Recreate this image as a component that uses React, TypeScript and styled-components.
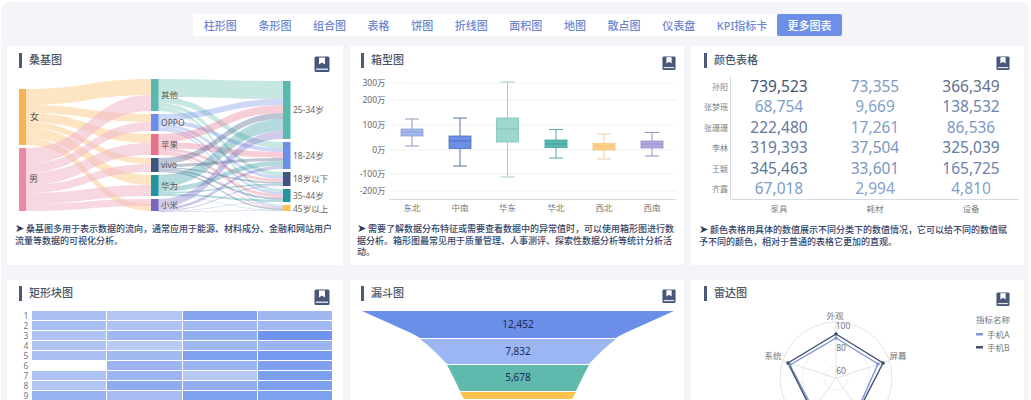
import React from "react";
import styled, { createGlobalStyle } from "styled-components";

const Global = createGlobalStyle`
  html, body { margin: 0; padding: 0; background: #fff; }
  body { width: 1031px; height: 400px; overflow: hidden; font-family: "Noto Sans", "Noto Sans CJK SC", sans-serif; }
`;

const Page = styled.div`
  box-sizing: border-box;
  width: 1028px;
  height: 398px;
  margin: 2px 2px 0 1px;
  background: #f3f5f9;
  border-radius: 8px 8px 0 0;
  overflow: hidden;
`;
const Nav = styled.nav`
  display: flex;
  width: max-content;
  height: 22px;
  margin: 12px 0 10px 192px;
  background: #fff;
`;
const Tab = styled.div<{ $active?: boolean }>`
  display: flex;
  align-items: center;
  padding: 0 ${(p) => (p.$active ? "10.5px" : "10.8px")};
  margin-left: ${(p) => (p.$active ? "-1px" : "0")};
  font-size: 11px;
  font-weight: 500;
  white-space: nowrap;
  color: ${(p) => (p.$active ? "#fff" : "#6c86d2")};
  background: ${(p) => (p.$active ? "#6e8fe8" : "transparent")};
  border-radius: ${(p) => (p.$active ? "2px" : "0")};
`;
const Grid = styled.main`
  display: grid;
  grid-template-columns: 336px 334px 333px;
  grid-template-rows: 219px 130px;
  column-gap: 7px;
  row-gap: 15px;
  margin-left: 6px;
`;
const Card = styled.section`
  display: flex;
  flex-direction: column;
  background: #fff;
  overflow: hidden;
`;
const Header = styled.header<{ $left: number; $right: number; $tall?: boolean }>`
  display: flex;
  justify-content: space-between;
  align-items: flex-start;
  flex: none;
  box-sizing: border-box;
  height: ${(p) => (p.$tall ? "31px" : "30px")};
  padding: ${(p) => (p.$tall ? "6px" : "7px")} ${(p) => p.$right}px 0 ${(p) => p.$left}px;
`;
const Title = styled.h3`
  display: flex;
  align-items: center;
  height: 14.5px;
  margin: 0;
  padding-left: 7px;
  border-left: 3px solid #4a5a78;
  font-size: 11px;
  line-height: 14px;
  font-weight: 500;
  color: #4a5568;
`;
const IconWrap = styled.svg<{ $drop?: number }>`
  flex: none;
  margin-top: ${(p) => 3 + (p.$drop ?? 0)}px;
`;
const Chart = styled.svg`
  display: block;
  flex: none;
  font-family: "Noto Sans", "Noto Sans CJK SC", sans-serif;
`;
const Desc = styled.div<{ $left: number }>`
  margin-top: 6px;
  padding-left: ${(p) => p.$left}px;
  font-size: 9px;
  line-height: 11.5px;
  font-weight: 500;
  color: #33456a;
`;
const DescLine = styled.div`
  white-space: nowrap;
`;
const Arrow = styled.span`
  display: inline-block;
  width: 11px;
  font-size: 11px;
  line-height: 9px;
  color: #2c3a58;
`;
const TableBody = styled.div`
  display: grid;
  grid-template-columns: 40px repeat(3, 96px);
  grid-auto-rows: 20.5px;
`;
const RowName = styled.div`
  display: flex;
  align-items: center;
  justify-content: flex-end;
  font-size: 8px;
  color: #7a7f8a;
  border-right: 1px solid #d5dae3;
  padding-right: 2px;
`;
const Value = styled.div<{ $color: string }>`
  display: flex;
  align-items: center;
  justify-content: center;
  font-size: 15.5px;
  color: ${(p) => p.$color};
  padding-bottom: 1px;
`;
const TableAxis = styled.div`
  display: grid;
  grid-template-columns: repeat(3, 96px);
  height: 18px;
  margin-left: 40px;
  border-top: 1px solid #d5dae3;
  width: 288px;
`;
const ColName = styled.div`
  display: flex;
  align-items: center;
  justify-content: center;
  font-size: 8.5px;
  color: #7a7f8a;
  padding-bottom: 2px;
`;
const HeatGrid = styled.div`
  display: grid;
  grid-template-columns: 10px repeat(4, 74.25px);
  grid-auto-rows: 9px;
  column-gap: 1px;
  row-gap: 1px;
  margin-left: 14px;
`;
const HeatLabel = styled.div`
  display: flex;
  align-items: center;
  justify-content: center;
  font-size: 8.5px;
  line-height: 9px;
  color: #777;
`;
const HeatCell = styled.div<{ $color: string }>`
  background: ${(p) => p.$color};
`;

const BookIcon = ({ size, drop }: { size: number; drop?: number }) => (
  <IconWrap $drop={drop} width={size} height={size} viewBox="0 0 16 16">
    <path d="M2 0.5H14a1.5 1.5 0 0 1 1.5 1.5V14.5a1.5 1.5 0 0 1-1.5 1.5H2A1.5 1.5 0 0 1 .5 14.5V2A1.5 1.5 0 0 1 2 .5Z" fill="#47577a" />
    <path d="M5 1.5H11V8.5L8 6.6L5 8.5Z" fill="#fff" />
    <rect x="2" y="12.5" width="12" height="1.4" fill="#dfe3ea" />
  </IconWrap>
);

const band = (x0: number, y0: number, x1: number, y1: number, w: number) => {
  const m = (x0 + x1) / 2;
  return `M${x0} ${y0}C${m} ${y0} ${m} ${y1} ${x1} ${y1}L${x1} ${y1 + w}C${m} ${y1 + w} ${m} ${y0 + w} ${x0} ${y0 + w}Z`;
};

const midNodes = [
  { name: "其他", y: 79, h: 32, c: "#5bb8ac", ly: 95 },
  { name: "OPPO", y: 114, h: 17, c: "#6b8ee8", ly: 122.5 },
  { name: "苹果", y: 134, h: 21, c: "#e8708a", ly: 144.5 },
  { name: "vivo", y: 158, h: 14, c: "#3f5480", ly: 165 },
  { name: "华为", y: 175, h: 21, c: "#22949f", ly: 185.5 },
  { name: "小米", y: 199, h: 12, c: "#7566c0", ly: 205 },
];
const rightNodes = [
  { name: "25-34岁", y: 81, h: 58, c: "#5bb8ac", ly: 110 },
  { name: "18-24岁", y: 142, h: 27, c: "#6b8ee8", ly: 155.5 },
  { name: "18岁以下", y: 172, h: 14, c: "#3f5480", ly: 179 },
  { name: "35-44岁", y: 189, h: 13, c: "#22949f", ly: 196 },
  { name: "45岁以上", y: 205, h: 6, c: "#fcc14f", ly: 208.5 },
];
const flows = [
  [18, 6, 4, 3, 1],
  [6, 4, 3, 2.5, 1.5],
  [8, 6, 3, 3, 1],
  [6, 3, 1.5, 2, 1.5],
  [12, 5, 1.5, 2, 0.5],
  [8, 3, 1, 0.5, 0.5],
];
const rightLinks = (() => {
  const rOff = rightNodes.map((n) => n.y);
  const out: { d: string; c: string }[] = [];
  flows.forEach((row, i) => {
    let my = midNodes[i].y;
    row.forEach((w, j) => {
      out.push({ d: band(158, my, 283, rOff[j], w), c: midNodes[i].c });
      my += w;
      rOff[j] += w;
    });
  });
  return out;
})();
const leftLinks = [
  [89, 79, 16, "#fbd29b"], [105, 114, 8, "#fbd29b"], [113, 134, 9, "#fbd29b"], [122, 158, 6, "#fbd29b"], [128, 175, 10, "#fbd29b"], [138, 204, 7, "#fbd29b"],
  [148, 95, 16, "#f2bccb"], [164, 122, 9, "#f2bccb"], [173, 143, 12, "#f2bccb"], [185, 164, 8, "#f2bccb"], [193, 185, 11, "#f2bccb"], [204, 199, 7, "#f2bccb"],
] as const;

const Sankey = () => (
  <Chart width={336} height={141} viewBox="7 76 336 141">
    {leftLinks.map(([a, b, w, c], i) => (
      <path key={i} d={band(26, a, 151, b, w)} fill={c} opacity={0.6} />
    ))}
    {rightLinks.map((l, i) => (
      <path key={i} d={l.d} fill={l.c} opacity={0.34} />
    ))}
    <rect x={19} y={89} width={7} height={56} fill="#f9b154" />
    <rect x={19} y={148} width={7} height={63} fill="#e98aa2" />
    <g fontSize={9} fill="#555">
      <text x={30} y={120}>女</text>
      <text x={29} y={182}>男</text>
    </g>
    {midNodes.map((n) => (
      <g key={n.name}>
        <rect x={151} y={n.y} width={7.5} height={n.h} fill={n.c} />
        <text x={161} y={n.ly + 3} fontSize={8.5} fill="#555">{n.name}</text>
      </g>
    ))}
    {rightNodes.map((n) => (
      <g key={n.name}>
        <rect x={283} y={n.y} width={7.5} height={n.h} fill={n.c} />
        <text x={293} y={n.ly + 3} fontSize={8.5} fill="#666">{n.name}</text>
      </g>
    ))}
  </Chart>
);

const boxes = [
  { x: 412, t: 119, b: 146, y0: 129, y1: 136, m: 132, f: "#9fb6f2", s: "#8fa3cf", w: "#8d9cbd" },
  { x: 460, t: 118, b: 166, y0: 136, y1: 148.5, m: 141, f: "#6e8fe8", s: "#4f6fb5", w: "#5a74a4" },
  { x: 507.5, t: 82, b: 177, y0: 118, y1: 142, m: 129, f: "#9ed8cc", s: "#80c2b8", w: "#a5cdc8" },
  { x: 556, t: 129.5, b: 158, y0: 140, y1: 147.5, m: 144, f: "#5bb8ac", s: "#3ca0a0", w: "#5fa8a8" },
  { x: 604, t: 134, b: 159, y0: 143.5, y1: 150, m: 146, f: "#fcd08a", s: "#f5c77a", w: "#e8d0a0" },
  { x: 652, t: 132.5, b: 156, y0: 141, y1: 148, m: 144, f: "#b3a8de", s: "#9c90cc", w: "#9c94bc" },
];
const boxAxis: [string, number][] = [["300万", 83], ["200万", 100], ["100万", 125], ["0万", 150], ["-100万", 174], ["-200万", 191]];
const boxCats = ["东北", "中南", "华东", "华北", "西北", "西南"];

const BoxPlot = () => (
  <Chart width={334} height={141} viewBox="350 76 334 141">
    {boxAxis.map(([l, y]) => (
      <g key={l}>
        <line x1={389} x2={676} y1={y} y2={y} stroke="#f1f2f4" />
        <text x={385.5} y={y + 3} fontSize={8.5} textAnchor="end" fill="#666">{l}</text>
      </g>
    ))}
    <line x1={389} x2={676} y1={199.5} y2={199.5} stroke="#d5dae3" />
    {boxes.map((b, i) => (
      <g key={i}>
        <line x1={b.x} x2={b.x} y1={b.t} y2={b.b} stroke={b.w} />
        <line x1={b.x - 7} x2={b.x + 7} y1={b.t} y2={b.t} stroke={b.w} />
        <line x1={b.x - 7} x2={b.x + 7} y1={b.b} y2={b.b} stroke={b.w} />
        <rect x={b.x - 11} y={b.y0} width={22} height={b.y1 - b.y0} fill={b.f} stroke={b.s} strokeWidth={0.8} />
        <line x1={b.x - 11} x2={b.x + 11} y1={b.m} y2={b.m} stroke={b.s} />
        <text x={b.x} y={211} fontSize={8.5} textAnchor="middle" fill="#777">{boxCats[i]}</text>
      </g>
    ))}
  </Chart>
);

const tableRows: [string, [string, string][]][] = [
  ["孙阳", [["739,523", "#46546e"], ["73,355", "#7f9ac4"], ["366,349", "#5f7090"]]],
  ["张梦瑶", [["68,754", "#7f9dc8"], ["9,669", "#83a0cc"], ["138,532", "#6c84ae"]]],
  ["张珊珊", [["222,480", "#64789e"], ["17,261", "#7f9dc8"], ["86,536", "#7b98c4"]]],
  ["李林", [["319,393", "#6078a4"], ["37,504", "#7a94c0"], ["325,039", "#607aa0"]]],
  ["王颖", [["345,463", "#5d74a0"], ["33,601", "#7a94c0"], ["165,725", "#6c84ae"]]],
  ["齐露", [["67,018", "#7f9dc8"], ["2,994", "#83a0cc"], ["4,810", "#83a0cc"]]],
];

const heat = [
  ["#a9bff2", "#b3c6f3", "#85a5ef", "#a0b8f1"],
  ["#a9bff2", "#afc3f3", "#a0b8f1", "#a0b8f1"],
  ["#aec2f3", "#9fb7f1", "#90adf0", "#6f94ee"],
  ["#afc3f3", "#b9caf4", "#a0b8f1", "#9ab3f1"],
  ["#aabff2", "#a3baf1", "#80a1ef", "#7599ee"],
  ["#ffffff", "#9cb5f1", "#9ab3f1", "#7fa0ef"],
  ["#aec2f3", "#9cb5f1", "#b5c7f3", "#7ba0ef"],
  ["#b3c6f3", "#8fabf0", "#92aef0", "#7da0ef"],
  ["#98b2f1", "#a6bcf2", "#7fa0ef", "#7da0ef"],
];

const Funnel = () => (
  <Chart width={334} height={88} viewBox="350 311 334 88">
    <path d="M362 311H674L625 333Q619 336 616 338H420Q417 336 411 333Z" fill="#6b8ee8" />
    <path d="M420 339H616Q604 348 589 364H447Q432 348 420 339Z" fill="#9cb5f3" />
    <path d="M447 365H589Q584 374 576 391H460Q452 374 447 365Z" fill="#60b9ad" />
    <path d="M460 392H576L566 410H470Z" fill="#fcc14f" />
    <g fontSize={10} fill="#1d2b57" textAnchor="middle">
      <text x={518} y={327.5}>12,452</text>
      <text x={518} y={354.5}>7,832</text>
      <text x={518} y={381}>5,678</text>
    </g>
  </Chart>
);

const toPts = (p: number[][]) => p.map((q) => q.join(",")).join(" ");
const ptsA = [[836, 338], [878, 364], [857, 411], [814, 411], [790, 365]];
const ptsB = [[836, 334], [883, 363], [859, 410], [812, 411], [788, 363]];
const spokes = [[836, 322], [889, 361], [869, 423], [803, 423], [783, 361]];

const Radar = () => (
  <Chart width={333} height={89} viewBox="691 311 333 89">
    <g fill="none" stroke="#e2e3e6">
      <circle cx={836} cy={378} r={56} strokeWidth={1} />
      <circle cx={836} cy={378} r={34} stroke="#f0f0f2" />
      <circle cx={836} cy={378} r={12} stroke="#f0f0f2" />
      {spokes.map((s, i) => (
        <line key={i} x1={836} y1={378} x2={s[0]} y2={s[1]} />
      ))}
    </g>
    <polygon points={toPts(ptsA)} fill="none" stroke="#7f97d0" strokeWidth={1.4} />
    <polygon points={toPts(ptsB)} fill="none" stroke="#41506f" strokeWidth={1.4} />
    {ptsA.map((p, i) => <circle key={i} cx={p[0]} cy={p[1]} r={1.8} fill="#7f97d0" />)}
    {ptsB.map((p, i) => <circle key={i} cx={p[0]} cy={p[1]} r={1.8} fill="#41506f" />)}
    <g fontSize={8.5} fill="#777" textAnchor="middle">
      <text x={835} y={319}>外观</text>
      <text x={898} y={359}>屏幕</text>
      <text x={773} y={359}>系统</text>
      <text x={843} y={328.5}>100</text>
      <text x={841} y={351}>80</text>
      <text x={841} y={373.5}>60</text>
    </g>
    <g fontSize={8.5} fill="#777">
      <text x={976} y={323}>指标名称</text>
      <rect x={976} y={333} width={7} height={2.5} fill="#7f97d0" />
      <text x={987} y={337.5}>手机A</text>
      <rect x={976} y={346} width={7} height={2.5} fill="#41506f" />
      <text x={987} y={350.5}>手机B</text>
    </g>
  </Chart>
);

const tabs = ["柱形图", "条形图", "组合图", "表格", "饼图", "折线图", "面积图", "地图", "散点图", "仪表盘", "KPI指标卡"];

const Description = ({ left, lines }: { left: number; lines: string[] }) => (
  <Desc $left={left}>
    {lines.map((l, i) => (
      <DescLine key={i}>
        {i === 0 && <Arrow>➤</Arrow>}
        {l}
      </DescLine>
    ))}
  </Desc>
);

export default function App() {
  return (
    <>
      <Global />
      <Page>
        <Nav>
          {tabs.map((t) => (
            <Tab key={t}>{t}</Tab>
          ))}
          <Tab $active>更多图表</Tab>
        </Nav>
        <Grid>
          <Card>
            <Header $left={12} $right={13}>
              <Title>桑基图</Title>
              <BookIcon size={16} />
            </Header>
            <Sankey />
            <Description
              left={8}
              lines={["桑基图多用于表示数据的流向，通常应用于能源、材料成分、金融和网站用户", "流量等数据的可视化分析。"]}
            />
          </Card>
          <Card>
            <Header $left={11} $right={8}>
              <Title>箱型图</Title>
              <BookIcon size={14} />
            </Header>
            <BoxPlot />
            <Description
              left={7}
              lines={[
                "需要了解数据分布特征或需要查看数据中的异常值时，可以使用箱形图进行数",
                "据分析。箱形图最常见用于质量管理、人事测评、探索性数据分析等统计分析活",
                "动。",
              ]}
            />
          </Card>
          <Card>
            <Header $left={13} $right={14}>
              <Title>颜色表格</Title>
              <BookIcon size={14} />
            </Header>
            <TableBody>
              {tableRows.map(([name, vals]) => (
                <React.Fragment key={name}>
                  <RowName>{name}</RowName>
                  {vals.map(([v, c]) => (
                    <Value key={v} $color={c}>{v}</Value>
                  ))}
                </React.Fragment>
              ))}
            </TableBody>
            <TableAxis>
              <ColName>家具</ColName>
              <ColName>耗材</ColName>
              <ColName>设备</ColName>
            </TableAxis>
            <Description
              left={8}
              lines={["颜色表格用具体的数值展示不同分类下的数值情况，它可以给不同的数值赋", "予不同的颜色，相对于普通的表格它更加的直观。"]}
            />
          </Card>
          <Card>
            <Header $left={12} $right={13} $tall>
              <Title>矩形块图</Title>
              <BookIcon size={16} />
            </Header>
            <HeatGrid>
              {heat.map((row, i) => (
                <React.Fragment key={i}>
                  <HeatLabel>{i + 1}</HeatLabel>
                  {row.map((c, j) => (
                    <HeatCell key={j} $color={c} />
                  ))}
                </React.Fragment>
              ))}
            </HeatGrid>
          </Card>
          <Card>
            <Header $left={11} $right={8} $tall>
              <Title>漏斗图</Title>
              <BookIcon size={14} />
            </Header>
            <Funnel />
          </Card>
          <Card>
            <Header $left={13} $right={14} $tall>
              <Title>雷达图</Title>
              <BookIcon size={14} drop={3} />
            </Header>
            <Radar />
          </Card>
        </Grid>
      </Page>
    </>
  );
}
